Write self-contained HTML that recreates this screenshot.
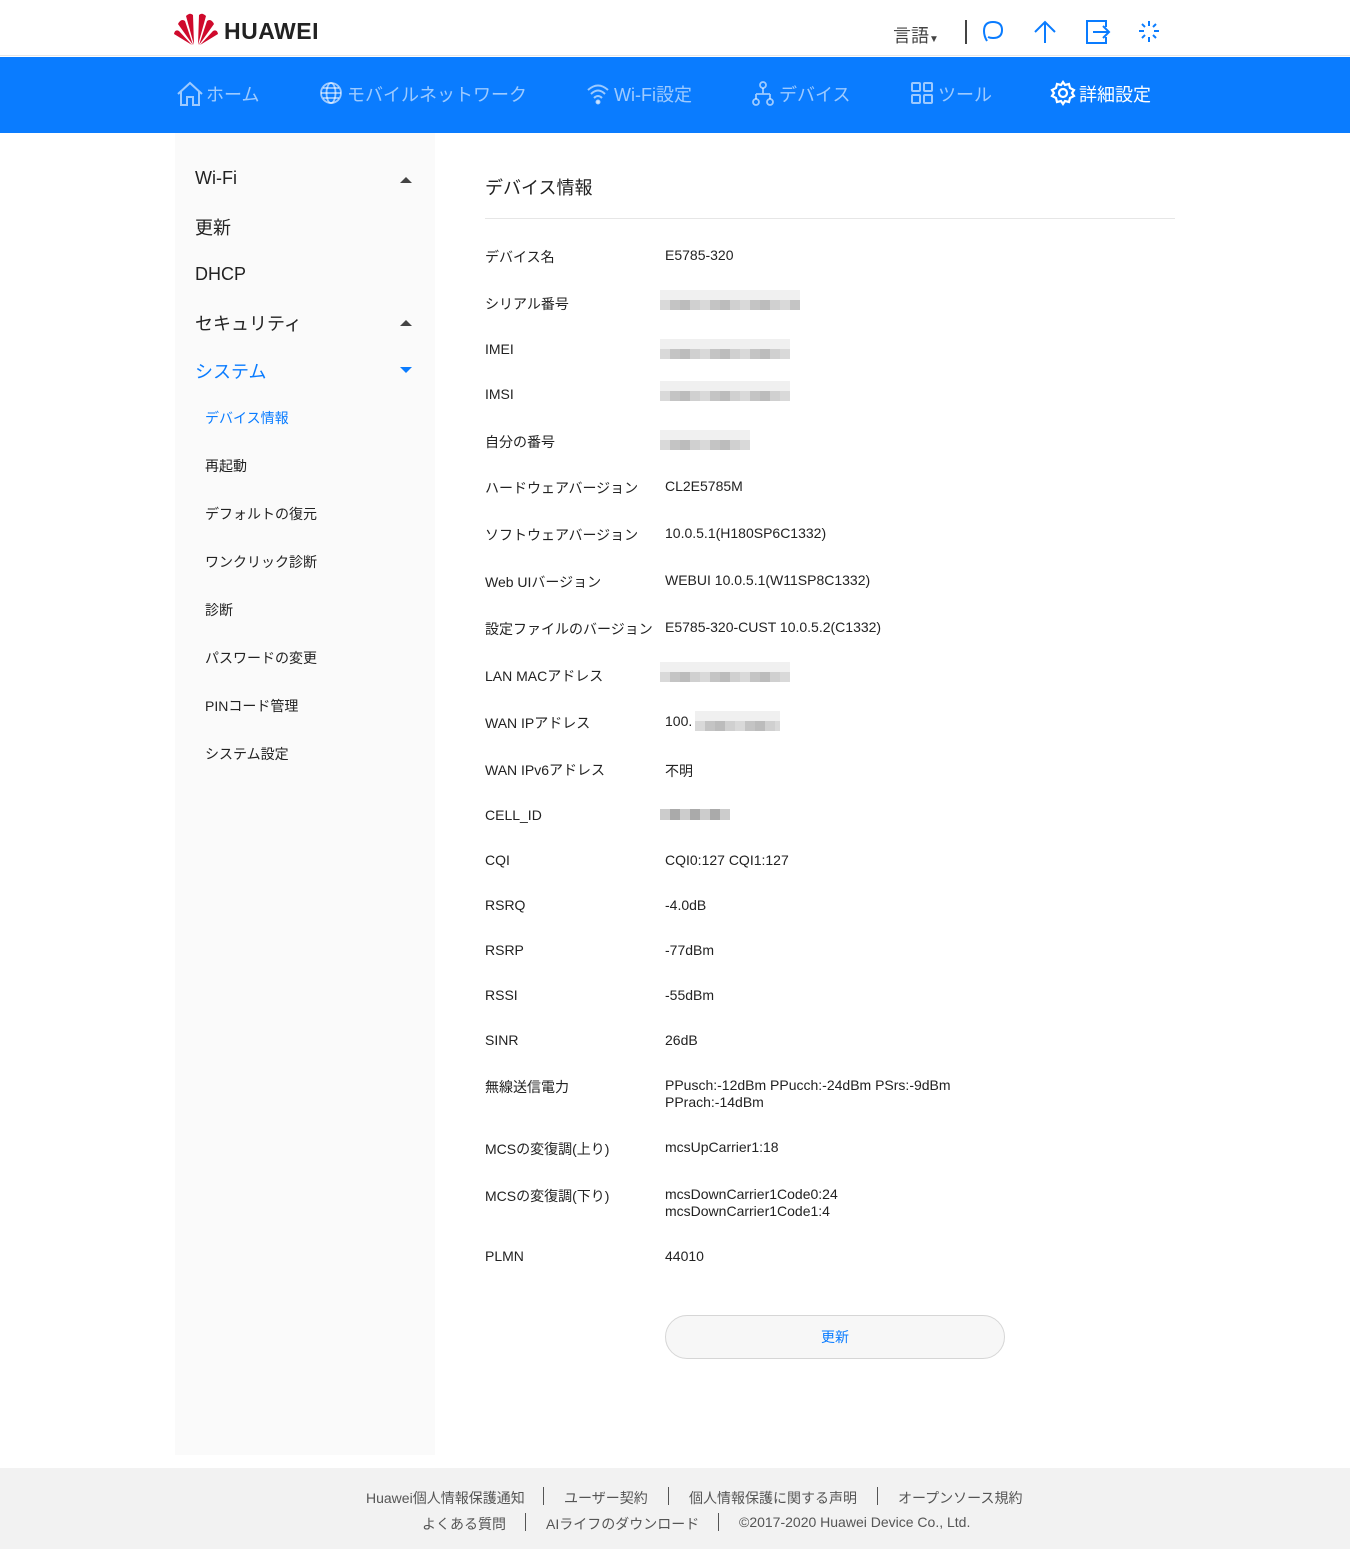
<!DOCTYPE html>
<html><head><meta charset="utf-8"><style>
*{margin:0;padding:0;box-sizing:border-box}
body{width:1350px;height:1549px;position:relative;background:#fff;font-family:"Liberation Sans","Noto Sans CJK JP",sans-serif;color:#222;overflow:hidden}
.a{position:absolute;white-space:nowrap}
.hdr{position:absolute;left:0;top:0;width:1350px;height:56px;background:#fff;border-bottom:1px solid #e6e6e6}
.nav{position:absolute;left:0;top:57px;width:1350px;height:76px;background:#0a7cff}
.s1{font-size:18px;color:#222}
.s2{font-size:14px;color:#222}
.lb{font-size:14px;color:#222;left:485px}
.vl{font-size:14px;color:#222;left:665px}
.blur{position:absolute;height:20px;background:
linear-gradient(#f0f0f0 0 50%,transparent 50%),
repeating-linear-gradient(90deg,#d9d9d9 0 10px,#c4c4c4 10px 20px,#bcbcbc 20px 30px,#d0d0d0 30px 40px)}
.tri{position:absolute;width:0;height:0;border-left:6px solid transparent;border-right:6px solid transparent}
.foot{position:absolute;left:0;top:1468px;width:1350px;height:81px;background:#f2f2f2}
.foot .a{font-size:14px;color:#555}
.sep{position:absolute;width:1px;height:18px;background:#555}
.nt{font-size:18px;color:rgba(255,255,255,.6);top:24px}
</style></head><body>
<div class="hdr"></div>
<svg class="a" style="left:174px;top:12px" width="44" height="34" viewBox="0 0 44 34">
<g fill="#cf0a2c"><path d="M20 33 L12 4 Q16 0 19 3 Z"/><path d="M24 33 L32 4 Q28 0 25 3 Z"/><path d="M19 33 L4 12 Q7 6 11 9 Z"/><path d="M25 33 L40 12 Q37 6 33 9 Z"/><path d="M18 33 L0 22 Q1 17 5 19 Z"/><path d="M26 33 L44 22 Q43 17 39 19 Z"/></g></svg>
<div class="a" style="left:224px;top:18px;font-size:23px;font-weight:bold;color:#222;letter-spacing:0.5px">HUAWEI</div>
<div class="a" style="left:893px;top:22px;font-size:18px;color:#444">言語<span style="font-size:10px">▼</span></div>
<div class="a" style="left:965px;top:20px;width:2px;height:24px;background:#444"></div>
<svg class="a" style="left:981px;top:19px" width="24" height="26" viewBox="0 0 24 26" fill="none" stroke="#0a7cff" stroke-width="2"><path d="M6 22 Q3 17 3 12 Q3 3 12 3 Q21 3 21 11 Q21 19 12 19 Q9 19 7 18"/></svg>
<svg class="a" style="left:1033px;top:19px" width="24" height="26" viewBox="0 0 24 26" fill="none" stroke="#0a7cff" stroke-width="2"><path d="M12 24V3M2 13L12 3L22 13"/></svg>
<svg class="a" style="left:1085px;top:19px" width="26" height="26" viewBox="0 0 26 26" fill="none" stroke="#0a7cff" stroke-width="2"><path d="M21 8V2H2V24H21V18M8 13H24M18 7L24 13L18 19"/></svg>
<svg class="a" style="left:1137px;top:19px" width="24" height="26" viewBox="0 0 24 26" fill="none" stroke="#0a7cff" stroke-width="2"><path d="M12 2V7M12 18V23M2 12H7M17 12H22M5 5L8 8M16 16L19 19M19 5L16 8M8 16L5 19"/></svg>

<div class="nav">
<svg class="a" style="left:176px;top:24px" width="28" height="26" viewBox="0 0 28 26" fill="none" stroke="rgba(255,255,255,.6)" stroke-width="2"><path d="M2 13L14 2L26 13M5 10V24H11V16H17V24H23V10"/></svg>
<div class="a nt" style="left:206px">ホーム</div>
<svg class="a" style="left:319px;top:24px" width="24" height="24" viewBox="0 0 24 24" fill="none" stroke="rgba(255,255,255,.6)" stroke-width="1.8"><circle cx="12" cy="12" r="10"/><ellipse cx="12" cy="12" rx="4.5" ry="10"/><path d="M2 12H22M4 7H20M4 17H20"/></svg>
<div class="a nt" style="left:347px">モバイルネットワーク</div>
<svg class="a" style="left:586px;top:24px" width="24" height="24" viewBox="0 0 24 24" fill="none" stroke="rgba(255,255,255,.6)" stroke-width="2"><path d="M2 9Q12 0 22 9M5 13Q12 6 19 13M8 17Q12 13 16 17"/><circle cx="12" cy="21" r="1.5" fill="rgba(255,255,255,.6)"/></svg>
<div class="a nt" style="left:614px">Wi-Fi設定</div>
<svg class="a" style="left:751px;top:24px" width="24" height="26" viewBox="0 0 24 26" fill="none" stroke="rgba(255,255,255,.6)" stroke-width="1.8"><circle cx="12" cy="4" r="3"/><path d="M12 7V13M5 13H19M5 13V18M19 13V18"/><circle cx="5" cy="21" r="3"/><circle cx="19" cy="21" r="3"/></svg>
<div class="a nt" style="left:779px">デバイス</div>
<svg class="a" style="left:911px;top:25px" width="22" height="22" viewBox="0 0 22 22" fill="none" stroke="rgba(255,255,255,.6)" stroke-width="2"><rect x="1" y="1" width="8" height="8" rx="1"/><rect x="13" y="1" width="8" height="8" rx="1"/><rect x="1" y="13" width="8" height="8" rx="1"/><rect x="13" y="13" width="8" height="8" rx="1"/></svg>
<div class="a nt" style="left:938px">ツール</div>
<svg class="a" style="left:1050px;top:23px" width="26" height="26" viewBox="0 0 26 26" fill="none" stroke="#fff" stroke-width="2.2"><circle cx="13" cy="13" r="4"/><path d="M13 2L15 5L19 4L20 8L24 10L22 13L24 16L20 18L19 22L15 21L13 24L11 21L7 22L6 18L2 16L4 13L2 10L6 8L7 4L11 5Z"/></svg>
<div class="a nt" style="left:1079px;color:#fff">詳細設定</div>
</div>

<div class="side" style="position:absolute;left:175px;top:133px;width:260px;height:1322px;background:#fafafa"></div>
<div class="a s1" style="left:195px;top:168px">Wi-Fi</div>
<div class="tri" style="left:400px;top:177px;border-bottom:6px solid #444"></div>
<div class="a s1" style="left:195px;top:214px">更新</div>
<div class="a s1" style="left:195px;top:264px">DHCP</div>
<div class="a s1" style="left:195px;top:310px">セキュリティ</div>
<div class="tri" style="left:400px;top:320px;border-bottom:6px solid #444"></div>
<div class="a s1" style="left:195px;top:358px;color:#0a7cff">システム</div>
<div class="tri" style="left:400px;top:367px;border-top:6px solid #0a7cff"></div>
<div class="a s2" style="left:205px;top:408px;color:#0a7cff">デバイス情報</div>
<div class="a s2" style="left:205px;top:456px">再起動</div>
<div class="a s2" style="left:205px;top:504px">デフォルトの復元</div>
<div class="a s2" style="left:205px;top:552px">ワンクリック診断</div>
<div class="a s2" style="left:205px;top:600px">診断</div>
<div class="a s2" style="left:205px;top:648px">パスワードの変更</div>
<div class="a s2" style="left:205px;top:696px">PINコード管理</div>
<div class="a s2" style="left:205px;top:744px">システム設定</div>

<div class="a" style="left:485px;top:174px;font-size:18px">デバイス情報</div>
<div class="a" style="left:485px;top:218px;width:690px;height:1px;background:#e6e6e6"></div>

<div class="a lb" style="top:247px">デバイス名</div><div class="a vl" style="top:247px">E5785-320</div>
<div class="a lb" style="top:294px">シリアル番号</div><div class="blur" style="left:660px;top:290px;width:140px"></div>
<div class="a lb" style="top:341px">IMEI</div><div class="blur" style="left:660px;top:339px;width:130px"></div>
<div class="a lb" style="top:386px">IMSI</div><div class="blur" style="left:660px;top:381px;width:130px"></div>
<div class="a lb" style="top:432px">自分の番号</div><div class="blur" style="left:660px;top:430px;width:90px"></div>
<div class="a lb" style="top:478px">ハードウェアバージョン</div><div class="a vl" style="top:478px">CL2E5785M</div>
<div class="a lb" style="top:525px">ソフトウェアバージョン</div><div class="a vl" style="top:525px">10.0.5.1(H180SP6C1332)</div>
<div class="a lb" style="top:572px">Web UIバージョン</div><div class="a vl" style="top:572px">WEBUI 10.0.5.1(W11SP8C1332)</div>
<div class="a lb" style="top:619px">設定ファイルのバージョン</div><div class="a vl" style="top:619px">E5785-320-CUST 10.0.5.2(C1332)</div>
<div class="a lb" style="top:666px">LAN MACアドレス</div><div class="blur" style="left:660px;top:662px;width:130px"></div>
<div class="a lb" style="top:713px">WAN IPアドレス</div><div class="a vl" style="top:713px">100.</div><div class="blur" style="left:695px;top:711px;width:85px"></div>
<div class="a lb" style="top:760px">WAN IPv6アドレス</div><div class="a vl" style="top:761px">不明</div>
<div class="a lb" style="top:807px">CELL_ID</div><div class="blur" style="left:660px;top:809px;width:70px;height:11px;background:repeating-linear-gradient(90deg,#ccc 0 10px,#aaa 10px 20px)"></div>
<div class="a lb" style="top:852px">CQI</div><div class="a vl" style="top:852px">CQI0:127 CQI1:127</div>
<div class="a lb" style="top:897px">RSRQ</div><div class="a vl" style="top:897px">-4.0dB</div>
<div class="a lb" style="top:942px">RSRP</div><div class="a vl" style="top:942px">-77dBm</div>
<div class="a lb" style="top:987px">RSSI</div><div class="a vl" style="top:987px">-55dBm</div>
<div class="a lb" style="top:1032px">SINR</div><div class="a vl" style="top:1032px">26dB</div>
<div class="a lb" style="top:1077px">無線送信電力</div><div class="a vl" style="top:1077px;line-height:17px">PPusch:-12dBm PPucch:-24dBm PSrs:-9dBm<br>PPrach:-14dBm</div>
<div class="a lb" style="top:1139px">MCSの変復調(上り)</div><div class="a vl" style="top:1139px">mcsUpCarrier1:18</div>
<div class="a lb" style="top:1186px">MCSの変復調(下り)</div><div class="a vl" style="top:1186px;line-height:17px">mcsDownCarrier1Code0:24<br>mcsDownCarrier1Code1:4</div>
<div class="a lb" style="top:1248px">PLMN</div><div class="a vl" style="top:1248px">44010</div>

<div class="a" style="left:665px;top:1315px;width:340px;height:44px;border:1px solid #d6d6d6;border-radius:22px;background:#f7f7f7;text-align:center;line-height:42px;font-size:14px;color:#0a7cff">更新</div>

<div class="foot">
<div class="a" style="left:366px;top:20px">Huawei個人情報保護通知</div>
<div class="sep" style="left:543px;top:19px"></div>
<div class="a" style="left:564px;top:20px">ユーザー契約</div>
<div class="sep" style="left:668px;top:19px"></div>
<div class="a" style="left:689px;top:20px">個人情報保護に関する声明</div>
<div class="sep" style="left:877px;top:19px"></div>
<div class="a" style="left:898px;top:20px">オープンソース規約</div>
<div class="a" style="left:422px;top:46px">よくある質問</div>
<div class="sep" style="left:525px;top:45px"></div>
<div class="a" style="left:546px;top:46px">AIライフのダウンロード</div>
<div class="sep" style="left:718px;top:45px"></div>
<div class="a" style="left:739px;top:46px">©2017-2020 Huawei Device Co., Ltd.</div>
</div>
</body></html>
